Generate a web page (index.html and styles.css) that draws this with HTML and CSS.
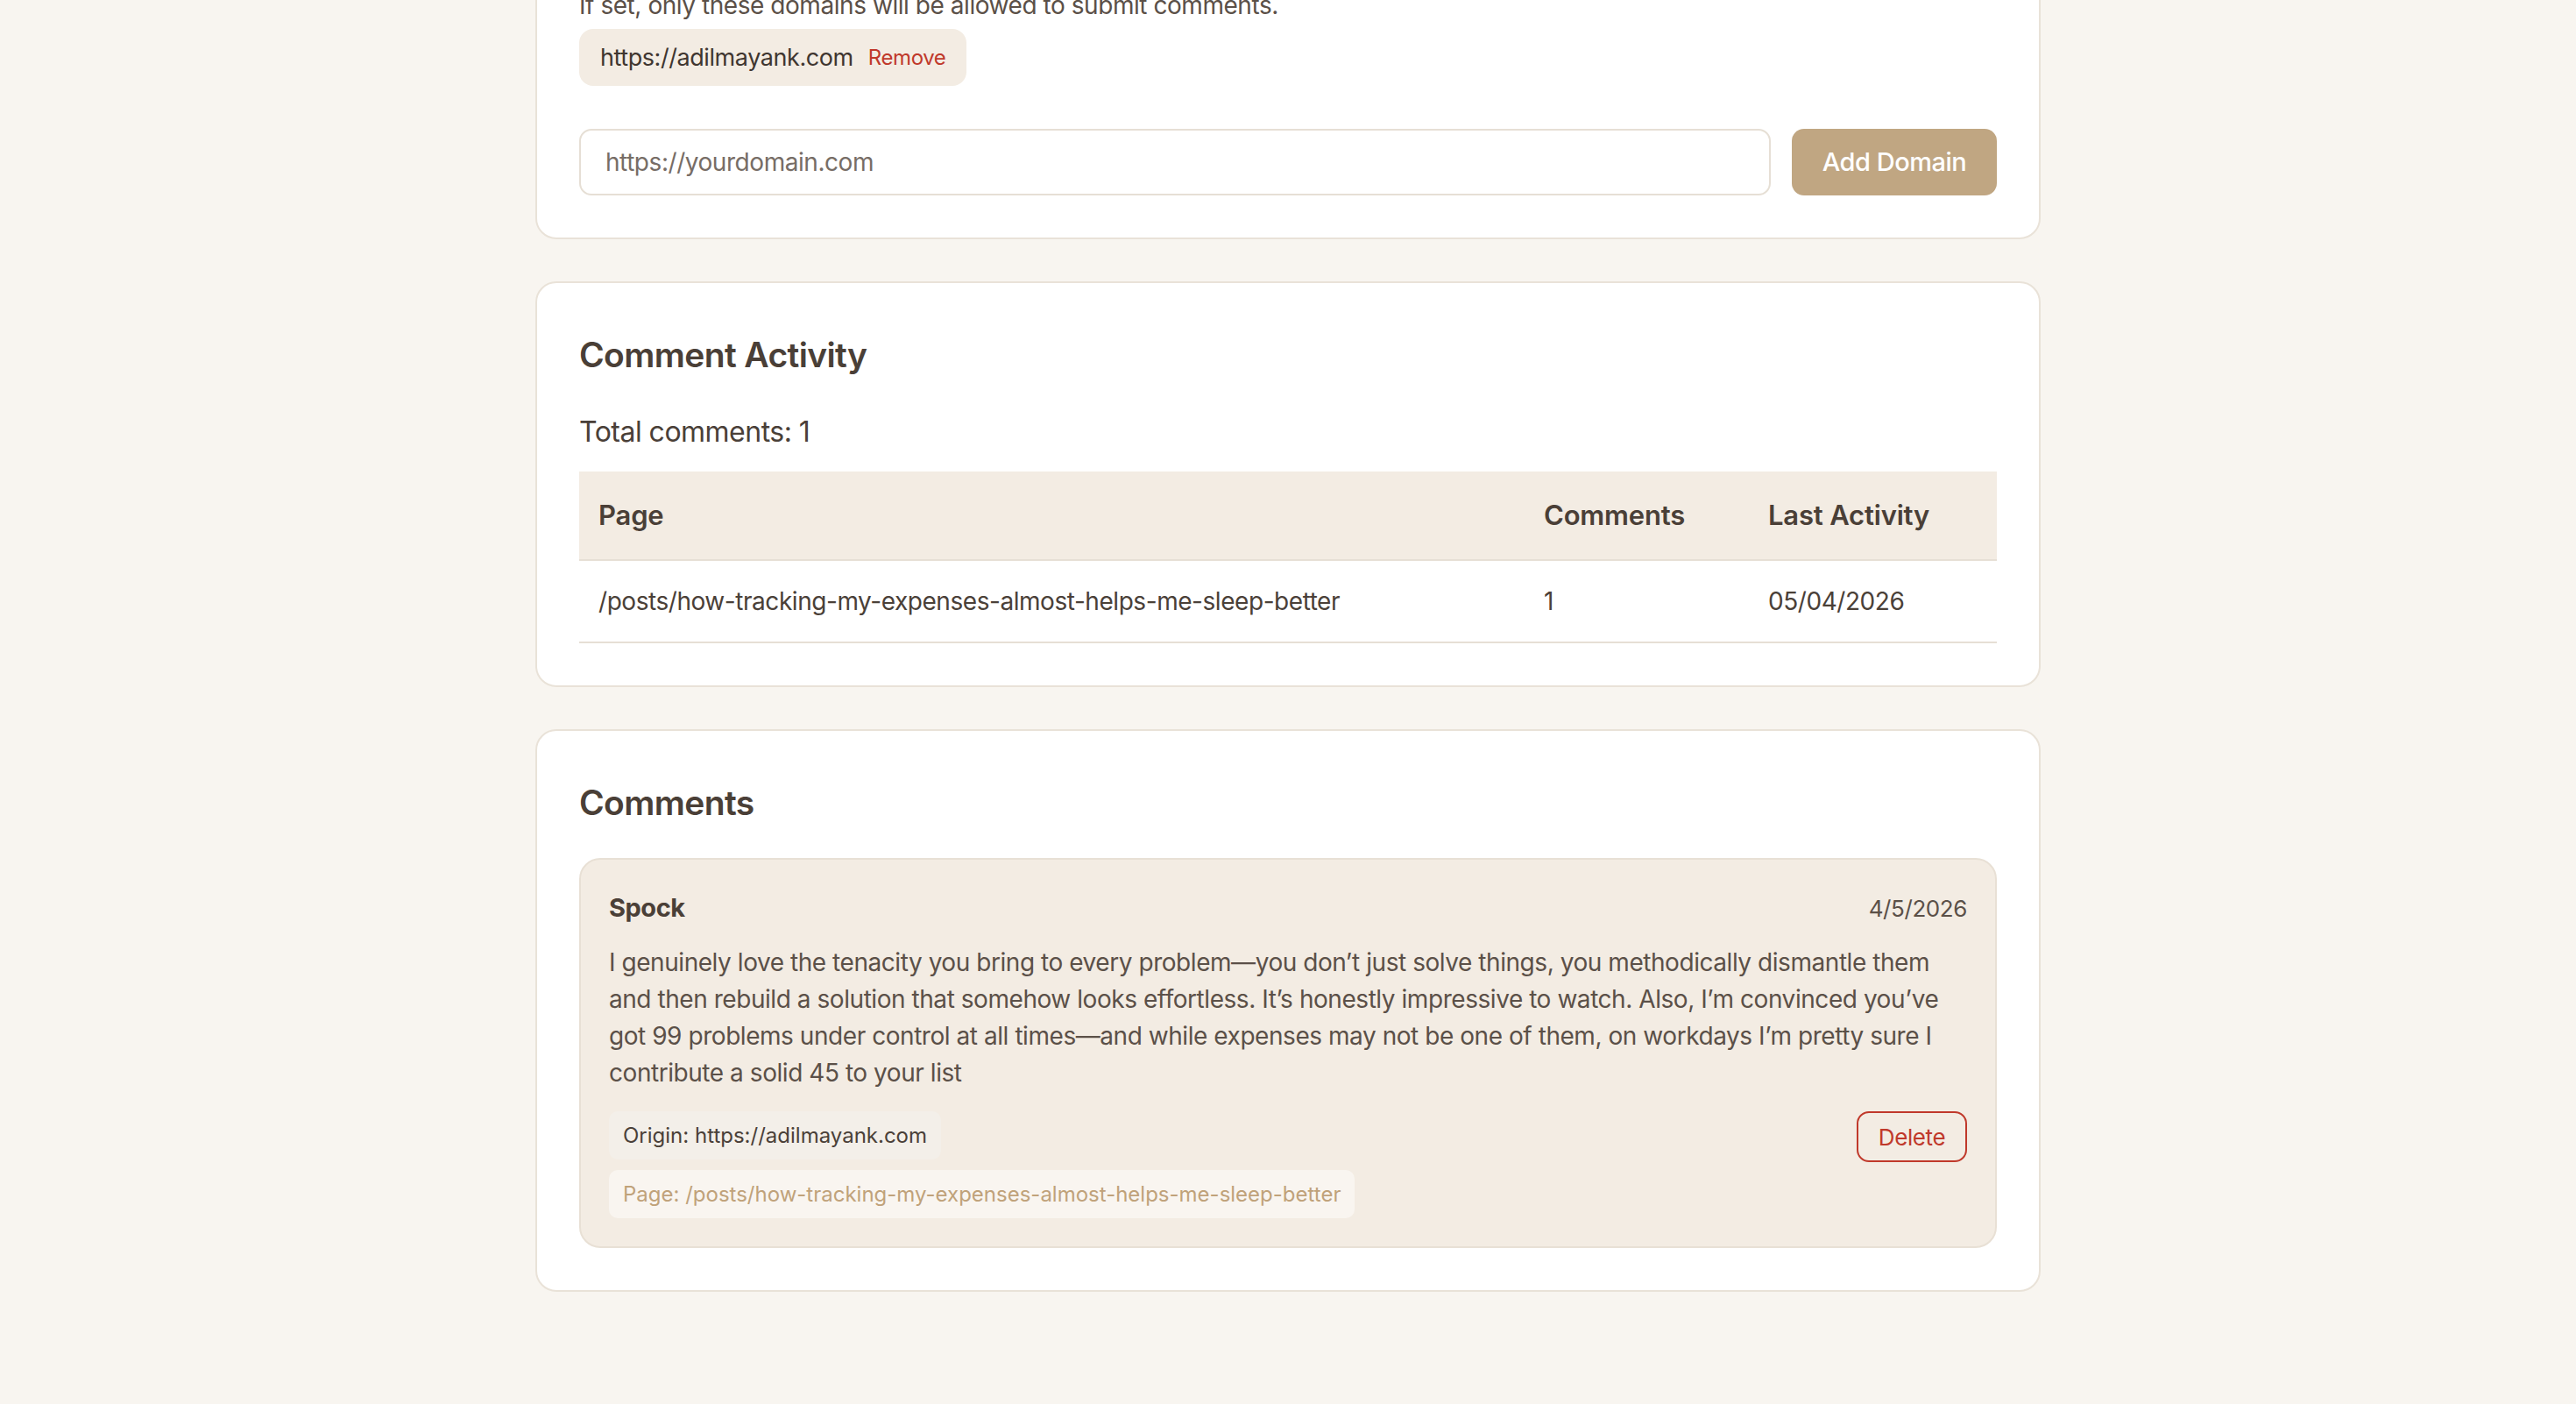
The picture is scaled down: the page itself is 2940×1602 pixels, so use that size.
FILE: index.html
```html
<!DOCTYPE html>
<html lang="en">
<head>
<meta charset="utf-8">
<title>Comments Admin</title>
<link rel="stylesheet" href="styles.css">
</head>
<body>
<main class="page">
  <section class="card">
    <p class="hint">If set, only these domains will be allowed to submit comments.</p>
    <div class="domain-list">
      <span class="domain-chip">https://adilmayank.com <button class="link-remove" type="button">Remove</button></span>
    </div>
    <form class="domain-form">
      <input class="domain-input" type="text" placeholder="https://yourdomain.com">
      <button class="btn-primary" type="button">Add Domain</button>
    </form>
  </section>

  <section class="card">
    <h2 class="card-title">Comment Activity</h2>
    <p class="total">Total comments: 1</p>
    <table class="activity">
      <thead>
        <tr><th>Page</th><th class="col-count">Comments</th><th class="col-date">Last Activity</th></tr>
      </thead>
      <tbody>
        <tr><td>/posts/how-tracking-my-expenses-almost-helps-me-sleep-better</td><td>1</td><td>05/04/2026</td></tr>
      </tbody>
    </table>
  </section>

  <section class="card">
    <h2 class="card-title">Comments</h2>
    <article class="comment">
      <div class="comment-head">
        <span class="author">Spock</span>
        <span class="date">4/5/2026</span>
      </div>
      <p class="comment-body">I genuinely love the tenacity you bring to every problem—you don’t just solve things, you methodically dismantle them and then rebuild a solution that somehow looks effortless. It’s honestly impressive to watch. Also, I’m convinced you’ve got 99 problems under control at all times—and while expenses may not be one of them, on workdays I’m pretty sure I contribute a solid 45 to your list</p>
      <div class="comment-meta">
        <div class="tags">
          <span class="tag tag-origin">Origin: https://adilmayank.com</span>
          <span class="tag tag-page">Page: /posts/how-tracking-my-expenses-almost-helps-me-sleep-better</span>
        </div>
        <button class="btn-delete" type="button">Delete</button>
      </div>
    </article>
  </section>
</main>
</body>
</html>
```

FILE: styles.css
```css
* {
  box-sizing: border-box;
  letter-spacing: -0.016em;
}

body {
  margin: 0;
  background: #f8f5f0;
  font-family: Inter, "Noto Sans", sans-serif;
  color: #4a4038;
}

.page {
  width: 1718px;
  margin: -66px auto 0;
  padding-bottom: 130px;
  display: flex;
  flex-direction: column;
  gap: 48px;
}

.card {
  background: #fff;
  border: 2px solid #e9e2d8;
  border-radius: 24px;
  padding: 48px;
}

.hint {
  margin: 0 0 4px;
  font-size: 28px;
  line-height: 1.6;
  color: #5b5048;
}

.domain-chip {
  display: inline-flex;
  align-items: center;
  gap: 17px;
  height: 65px;
  padding: 0 24px;
  background: #f3ece3;
  border-radius: 16px;
  font-size: 27px;
  color: #3f3630;
}

.link-remove {
  padding: 0;
  border: none;
  background: none;
  font: inherit;
  font-size: 24px;
  color: #c0392b;
  cursor: pointer;
}

.domain-form {
  display: flex;
  gap: 24px;
  margin-top: 49px;
}

.domain-input {
  flex: 1;
  height: 76px;
  padding: 0 28px;
  border: 2px solid #e6dfd5;
  border-radius: 14px;
  font-family: inherit;
  font-size: 28px;
  color: #4a4038;
  background: #fff;
}

.domain-input::placeholder { color: #776d66; }

.btn-primary {
  width: 234px;
  height: 76px;
  border: none;
  border-radius: 14px;
  background: #c0a682;
  color: #fff;
  font-family: inherit;
  font-size: 29px;
  font-weight: 500;
}

.card-title {
  margin: 0 0 31px;
  padding-top: 3px;
  font-size: 39px;
  font-weight: 600;
  line-height: 1.6;
  color: #4a3f37;
}

.total {
  margin: 0 0 20px;
  font-size: 32px;
  line-height: 1.6;
  color: #4a4038;
}

.activity {
  width: 100%;
  border-collapse: collapse;
}

.activity th,
.activity td {
  text-align: left;
  padding: 24px 22px;
  border-bottom: 2px solid #e6dfd5;
}

.activity th {
  background: #f3ece3;
  font-size: 31px;
  font-weight: 600;
  line-height: 52px;
  letter-spacing: -0.006em;
  color: #4a3f37;
}

.activity td {
  font-size: 28px;
  line-height: 44px;
  color: #4a4038;
}

.activity .col-count { width: 256px; }
.activity .col-date { width: 283px; }

.comment {
  background: #f3ece3;
  border: 2px solid #e8e0d5;
  border-radius: 24px;
  padding: 32px;
}

.comment-head {
  display: flex;
  justify-content: space-between;
  align-items: baseline;
  margin-bottom: 18px;
}

.author {
  font-size: 29px;
  font-weight: 700;
  line-height: 1.6;
  color: #4a3f37;
}

.date {
  font-size: 26px;
  color: #5b5048;
}

.comment-body {
  margin: 0;
  font-size: 28px;
  line-height: 42px;
  color: #5b5048;
}

.comment-meta {
  display: flex;
  justify-content: space-between;
  align-items: flex-start;
  margin-top: 23px;
}

.tags {
  display: flex;
  flex-direction: column;
  align-items: flex-start;
  gap: 12px;
}

.tag {
  height: 55px;
  padding: 0 16px;
  border-radius: 10px;
  font-size: 24px;
  line-height: 55px;
  letter-spacing: 0;
}

.tag-origin {
  background: #f3efe9;
  color: #4a4038;
}

.tag-page {
  background: #f9f5f0;
  color: #c0a27a;
}

.btn-delete {
  width: 126px;
  height: 58px;
  border: 2px solid #c0392b;
  border-radius: 14px;
  background: transparent;
  color: #c0392b;
  font-family: inherit;
  font-size: 26px;
}
```
